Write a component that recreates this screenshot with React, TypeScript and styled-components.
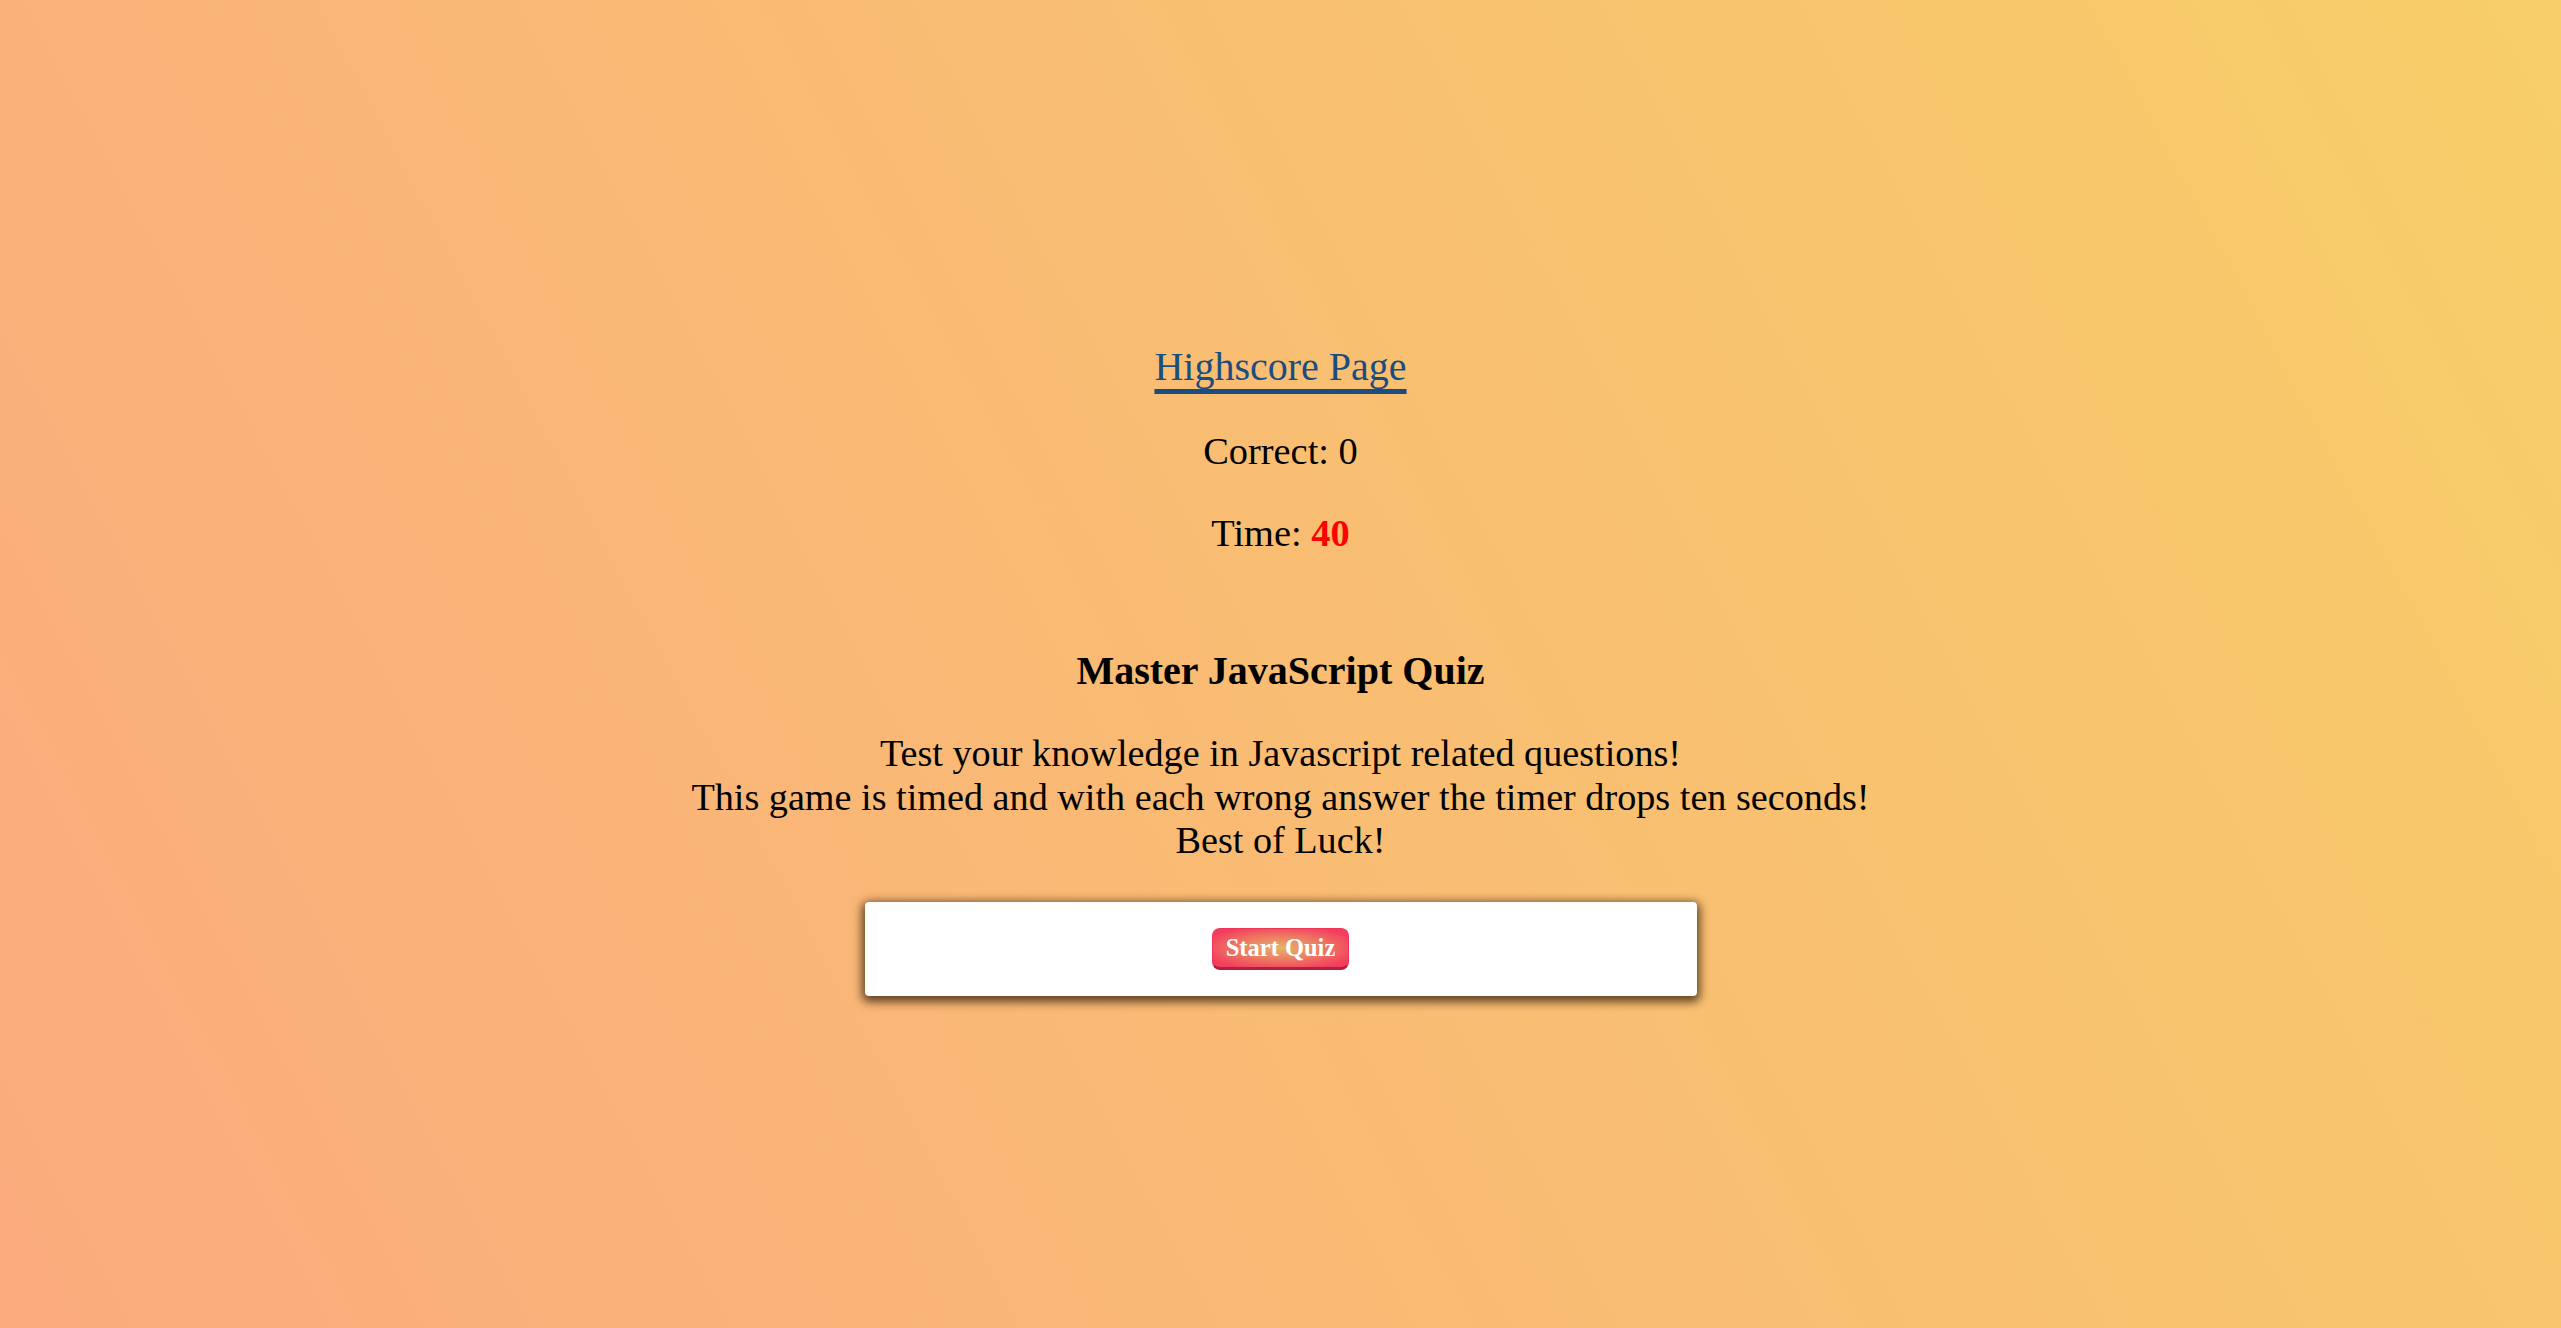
import React from "react";
import styled, { createGlobalStyle } from "styled-components";

const GlobalStyle = createGlobalStyle`
  html, body, #root {
    margin: 0;
    padding: 0;
    min-height: 100%;
  }
  body {
    font-family: "Liberation Serif", "Times New Roman", serif;
    color: #000;
  }
`;

const Page = styled.main`
  min-height: 100vh;
  box-sizing: border-box;
  background-color: #fbab7e;
  background-image: linear-gradient(62deg, #fbab7e 0%, #f7ce68 100%);
  display: flex;
  flex-direction: column;
  align-items: center;
  padding-top: 344px;
  text-align: center;
`;

const Header = styled.header`
  display: flex;
  flex-direction: column;
  align-items: center;
  gap: 39px;
`;

const ScoreLink = styled.a`
  font-size: 40px;
  line-height: 46px;
  color: #1c4d80;
  text-decoration: underline;
  text-decoration-thickness: 5px;
  text-underline-offset: 9px;
`;

const Stats = styled.div`
  display: flex;
  flex-direction: column;
  align-items: center;
  gap: 38px;
`;

const Stat = styled.p`
  margin: 0;
  font-size: 38.4px;
  line-height: 44px;
`;

const TimeValue = styled.span`
  color: #ff0000;
  font-weight: bold;
`;

const Intro = styled.section`
  margin-top: 93px;
  display: flex;
  flex-direction: column;
  align-items: center;
`;

const Title = styled.h1`
  margin: 0;
  font-size: 40px;
  line-height: 46px;
  font-weight: bold;
`;

const Description = styled.p`
  margin: 38px 0 0;
  font-size: 38.2px;
  line-height: 43.7px;
`;

const Card = styled.div`
  margin-top: 39px;
  width: 832px;
  height: 94px;
  box-sizing: border-box;
  background: #ffffff;
  border-radius: 4px;
  box-shadow: 0 3px 10px 3px rgba(40, 20, 0, 0.72);
  display: flex;
  align-items: center;
  justify-content: center;
`;

const StartButton = styled.button`
  width: 137px;
  height: 42px;
  box-sizing: border-box;
  padding: 0;
  font-family: "Liberation Serif", "Times New Roman", serif;
  font-size: 24.5px;
  font-weight: bold;
  color: #ffffff;
  border: 1px solid #ee3458;
  border-bottom: 3px solid #b1213f;
  border-radius: 8px;
  background: radial-gradient(ellipse at center, #e4b467 0%, #ec8063 40%, #f43c5e 85%);
  cursor: pointer;
`;

export default function App() {
  return (
    <>
      <GlobalStyle />
      <Page>
        <Header>
          <ScoreLink href="#">Highscore Page</ScoreLink>
          <Stats>
            <Stat>Correct: 0</Stat>
            <Stat>
              Time: <TimeValue>40</TimeValue>
            </Stat>
          </Stats>
        </Header>
        <Intro>
          <Title>Master JavaScript Quiz</Title>
          <Description>
            Test your knowledge in Javascript related questions!
            <br />
            This game is timed and with each wrong answer the timer drops ten seconds!
            <br />
            Best of Luck!
          </Description>
        </Intro>
        <Card>
          <StartButton>Start Quiz</StartButton>
        </Card>
      </Page>
    </>
  );
}
